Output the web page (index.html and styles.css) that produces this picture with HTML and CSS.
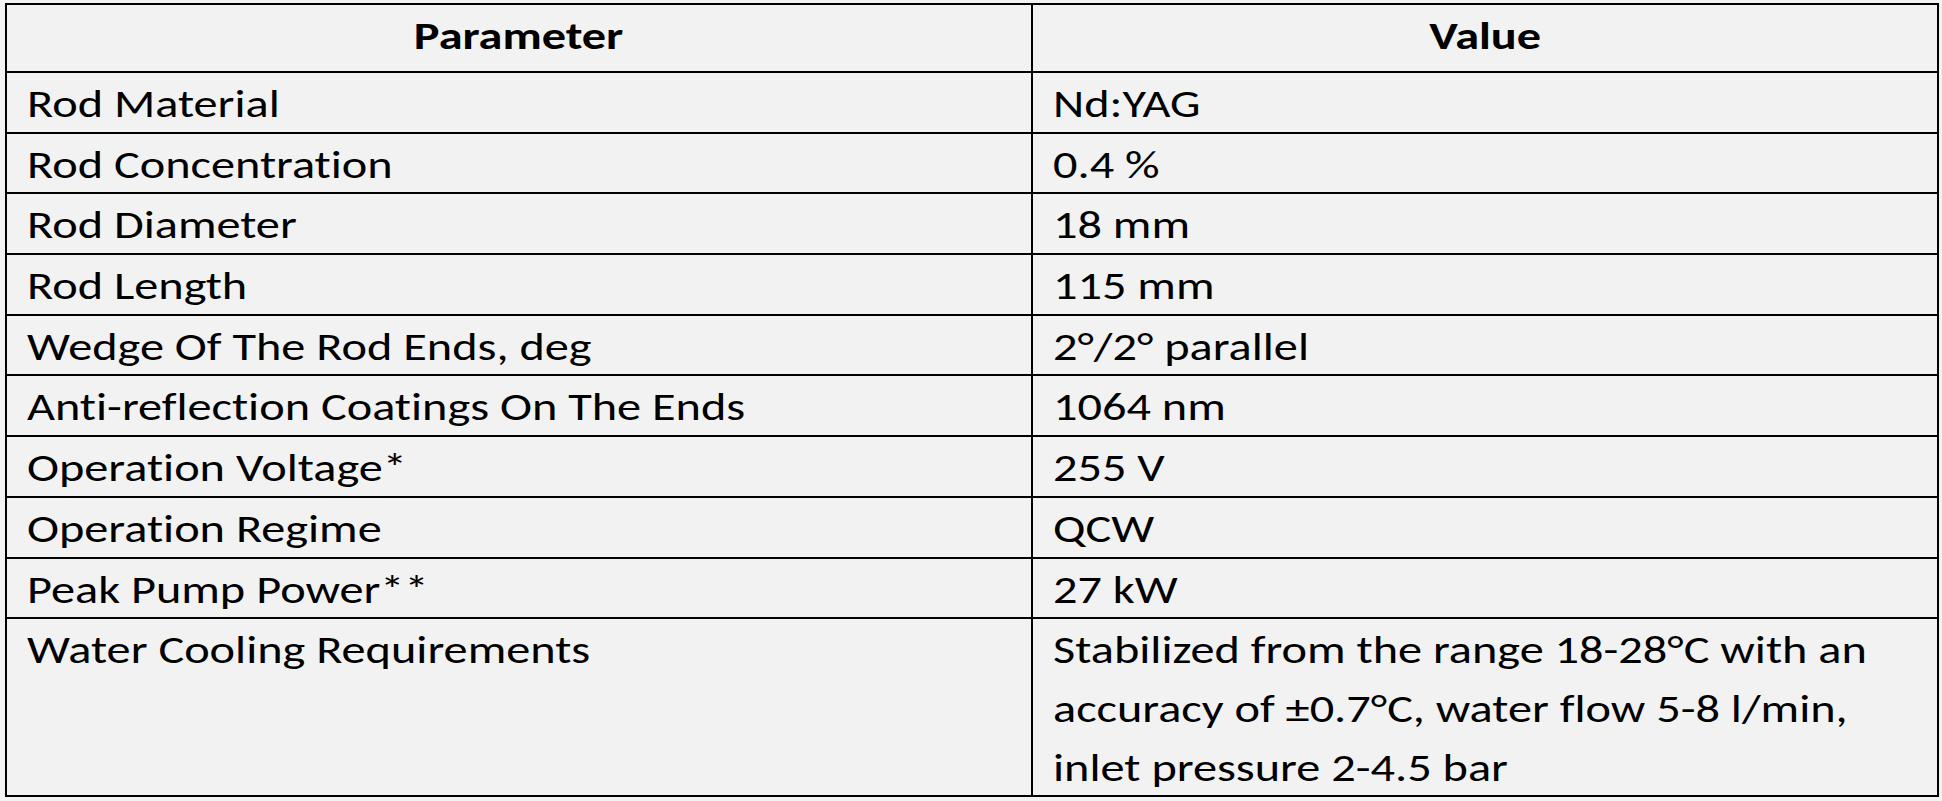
FILE: index.html
```html
<!DOCTYPE html>
<html lang="en">
<head>
<meta charset="utf-8">
<title>Parameters</title>
<link rel="stylesheet" href="styles.css">
</head>
<body>
<div class="spec">
  <div class="cell head"><span class="txt">Parameter</span></div>
  <div class="cell head"><span class="txt">Value</span></div>

  <div class="cell"><span class="txt">Rod Material</span></div>
  <div class="cell val"><span class="txt">Nd:YAG</span></div>

  <div class="cell"><span class="txt">Rod Concentration</span></div>
  <div class="cell val"><span class="txt">0.4 %</span></div>

  <div class="cell"><span class="txt">Rod Diameter</span></div>
  <div class="cell val"><span class="txt">18 mm</span></div>

  <div class="cell"><span class="txt">Rod Length</span></div>
  <div class="cell val"><span class="txt">115 mm</span></div>

  <div class="cell"><span class="txt">Wedge Of The Rod Ends, deg</span></div>
  <div class="cell val"><span class="txt">2°/2° parallel</span></div>

  <div class="cell"><span class="txt">Anti-reflection Coatings On The Ends</span></div>
  <div class="cell val"><span class="txt">1064 nm</span></div>

  <div class="cell"><span class="txt">Operation Voltage*</span></div>
  <div class="cell val"><span class="txt">255 V</span></div>

  <div class="cell"><span class="txt">Operation Regime</span></div>
  <div class="cell val"><span class="txt">QCW</span></div>

  <div class="cell"><span class="txt">Peak Pump Power**</span></div>
  <div class="cell val"><span class="txt">27 kW</span></div>

  <div class="cell"><span class="txt">Water Cooling Requirements</span></div>
  <div class="cell val"><span class="txt">Stabilized from the range 18-28°C with an<br>accuracy of ±0.7°C, water flow 5-8 l/min,<br>inlet pressure 2-4.5 bar</span></div>
</div>
</body>
</html>
```

FILE: styles.css
```css
html, body {
  background: #f2f2f2;
}
body {
  margin: 3px 0 0 5px;
  font-family: Carlito, Lato, "Liberation Sans", sans-serif;
  color: #000;
}
.spec {
  display: grid;
  grid-template-columns: 1026px 906px;
  grid-template-rows: 68px repeat(9, 60.7px) 177.7px;
  width: 1934px;
  border-top: 2px solid #000;
  border-left: 2px solid #000;
  box-sizing: border-box;
}
.cell {
  box-sizing: border-box;
  border-right: 2px solid #000;
  border-bottom: 2px solid #000;
  font-size: 39px;
  line-height: 58.7px;
  padding: 2px 0 0 20px;
  white-space: nowrap;
  font-variant-ligatures: none;
}
.txt {
  display: inline-block;
  transform: scaleX(1.238);
  transform-origin: left center;
}
.head {
  font-weight: bold;
  text-align: center;
  padding-left: 0;
}
.head .txt {
  transform-origin: center center;
}
.val {
  padding-left: 20px;
}
```
